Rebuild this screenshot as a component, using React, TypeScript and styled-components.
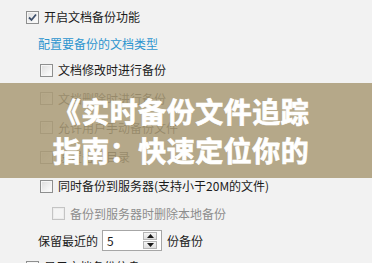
import React from "react";
import styled, { createGlobalStyle } from "styled-components";

const GlobalStyle = createGlobalStyle`
    html, body {
        margin: 0;
        padding: 0;
        background: #f0f0f0;
    }
    body {
        width: 372px;
        height: 263px;
        overflow: hidden;
        font-family: "Noto Sans CJK SC", "Liberation Sans", sans-serif;
    }
`;

const Page = styled.div`
    position: relative;
    width: 372px;
    height: 263px;
    overflow: hidden;
    background: #f2f2f2;
    padding-top: 4px;
    box-sizing: border-box;
`;

const Row = styled.div<{ $h: number; $indent: number }>`
    height: ${props => props.$h}px;
    padding-left: ${props => props.$indent}px;
    display: flex;
    align-items: center;
    font-size: 12px;
    color: #1b1b1b;
    white-space: nowrap;
`;

const Box = styled.span<{ $disabled?: boolean }>`
    width: 11px;
    height: 11px;
    border: 1px solid ${props => props.$disabled ? "#c4c4c4" : "#8e8f8f"};
    background: ${props => props.$disabled
        ? "#f4f4f4"
        : "linear-gradient(135deg, #dcdcdc 0%, #f2f2f2 60%, #ffffff 100%)"};
    box-shadow: inset 0 0 0 1px ${props => props.$disabled ? "#ececec" : "#f6f6f6"};
    margin-right: 5px;
    display: inline-flex;
    align-items: center;
    justify-content: center;
    flex-shrink: 0;
`;

const Label = styled.span<{ $disabled?: boolean }>`
    color: ${props => props.$disabled ? "#8d8d8d" : "#1b1b1b"};
    line-height: 14px;
`;

const LinkText = styled.span`
    color: #2e95cf;
    font-size: 12px;
`;

const Spin = styled.div`
    width: 60px;
    height: 21px;
    margin: 0 5px 0 4px;
    border: 1px solid #a6a6a6;
    background: #ffffff;
    box-sizing: border-box;
    display: flex;
    align-items: center;
    justify-content: space-between;
    padding-left: 4px;
    font-size: 12px;
`;

const SpinButtons = styled.div`
    width: 14px;
    height: 17px;
    margin-right: 4px;
    display: flex;
    flex-direction: column;
    gap: 1px;
`;

const SpinButton = styled.div`
    flex: 1;
    border: 1px solid #b5b5b5;
    background: linear-gradient(#f6f6f6, #dedede);
    display: flex;
    align-items: center;
    justify-content: center;
`;

const Band = styled.div`
    position: absolute;
    left: 0;
    top: 83px;
    width: 372px;
    height: 95px;
    background: rgba(171, 156, 120, 0.86);
    display: flex;
    flex-direction: column;
    align-items: center;
    justify-content: center;
    box-sizing: border-box;
    padding-right: 10px;
`;

const Headline = styled.div`
    font-family: "Noto Sans CJK SC", sans-serif;
    font-weight: 700;
    font-size: 28px;
    line-height: 39px;
    color: #ffffff;
    -webkit-text-stroke: 0.7px #ffffff;
    letter-spacing: 0.5px;
    white-space: nowrap;
`;

const Check = () => (
    <svg width="9" height="9" viewBox="0 0 9 9">
        <path d="M1 4.5 L3.5 7 L8 1.5" fill="none" stroke="#3d4f6b" strokeWidth="1.8" />
    </svg>
);

const Arrow = ({ up }: { up: boolean }) => (
    <svg width="7" height="4" viewBox="0 0 7 4">
        <path d={up ? "M0 4 L3.5 0 L7 4 Z" : "M0 0 L3.5 4 L7 0 Z"} fill="#1a1a1a" />
    </svg>
);

interface CheckRowProps {
    h: number;
    indent: number;
    text: string;
    checked?: boolean;
    disabled?: boolean;
}

const CheckRow: React.FC<CheckRowProps> = ({ h, indent, text, checked, disabled }) => (
    <Row $h={h} $indent={indent}>
        <Box $disabled={disabled}>{checked ? <Check /> : null}</Box>
        <Label $disabled={disabled}>{text}</Label>
    </Row>
);

export default function App() {
    return (
        <Page>
            <GlobalStyle />
            <CheckRow h={26} indent={26} text="开启文档备份功能" checked />
            <Row $h={26} $indent={38}>
                <LinkText>配置要备份的文档类型</LinkText>
            </Row>
            <CheckRow h={28} indent={40} text="文档修改时进行备份" />
            <CheckRow h={29} indent={40} text="文档删除时进行备份" />
            <CheckRow h={29} indent={40} text="允许用户手动备份文件" />
            <CheckRow h={30} indent={40} text="设置备份目录" />
            <CheckRow h={28} indent={40} text="同时备份到服务器(支持小于20M的文件)" />
            <CheckRow h={27} indent={52} text="备份到服务器时删除本地备份" disabled />
            <Row $h={27} $indent={38}>
                <Label>保留最近的</Label>
                <Spin>
                    <span>5</span>
                    <SpinButtons>
                        <SpinButton><Arrow up /></SpinButton>
                        <SpinButton><Arrow up={false} /></SpinButton>
                    </SpinButtons>
                </Spin>
                <Label>份备份</Label>
            </Row>
            <CheckRow h={26} indent={26} text="显示文档备份信息" />
            <Band>
                <Headline>《实时备份文件追踪</Headline>
                <Headline>指南：快速定位你的</Headline>
            </Band>
        </Page>
    );
}
